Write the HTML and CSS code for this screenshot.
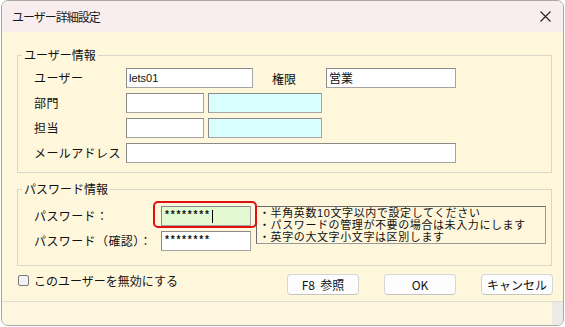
FILE: index.html
```html
<!DOCTYPE html>
<html lang="ja">
<head>
    <meta charset="UTF-8">
    <title>ユーザー詳細設定</title>
<link rel="stylesheet" href="styles.css">
</head>
<body>

    <div class="window">
        <div class="titlebar">
            <span class="title">ユーザー詳細設定</span>
            <svg class="close" width="11" height="11" viewBox="0 0 11 11">
                <path d="M0.5 0.5 L10.5 10.5 M10.5 0.5 L0.5 10.5" stroke="#222" stroke-width="1.1" fill="none"/>
            </svg>
        </div>

        <div class="content">
            <fieldset class="group group-user">
                <legend>ユーザー情報</legend>
                <div class="rows">
                    <div class="row">
                        <span class="lbl">ユーザー</span>
                        <div class="field w-user">lets01</div>
                        <span class="lbl-auth">権限</span>
                        <div class="field w-auth">営業</div>
                    </div>
                    <div class="row">
                        <span class="lbl">部門</span>
                        <div class="field w-code"></div>
                        <div class="field w-name cyan"></div>
                    </div>
                    <div class="row">
                        <span class="lbl">担当</span>
                        <div class="field w-code"></div>
                        <div class="field w-name cyan"></div>
                    </div>
                    <div class="row">
                        <span class="lbl">メールアドレス</span>
                        <div class="field w-mail"></div>
                    </div>
                </div>
            </fieldset>

            <fieldset class="group group-pass">
                <legend>パスワード情報</legend>
                <div class="pass-body">
                    <div class="rows">
                        <div class="row">
                            <span class="lbl lbl-pass">パスワード：</span>
                            <div class="pw-wrap">
                                <div class="field pw green">********<span class="caret"></span></div>
                                <span class="highlight"></span>
                            </div>
                        </div>
                        <div class="row">
                            <span class="lbl lbl-pass">パスワード（確認）：</span>
                            <div class="field pw">********</div>
                        </div>
                    </div>
                    <div class="note">
                        <p>・半角英数10文字以内で設定してください</p>
                        <p>・パスワードの管理が不要の場合は未入力にします</p>
                        <p>・英字の大文字小文字は区別します</p>
                    </div>
                </div>
            </fieldset>

            <div class="footer">
                <label class="check">
                    <span class="box"></span>
                    このユーザーを無効にする
                </label>
                <div class="buttons">
                    <button class="btn">F8&nbsp;&nbsp;参照</button>
                    <button class="btn">OK</button>
                    <button class="btn">キャンセル</button>
                </div>
            </div>
        </div>

        <div class="statusbar">
            <div class="status-main"></div>
            <div class="status-side"></div>
        </div>
    </div>

</body>
</html>
```

FILE: styles.css
```css
/* Basic reset */
* {
    margin: 0;
    padding: 0;
    box-sizing: border-box;
}

body {
    font-family: "Noto Sans CJK JP", "Noto Sans", sans-serif;
    font-size: 12px;
    color: #111;
    background-color: #ffffff;
}

.window {
    margin-left: 1px;
    width: 563px;
    height: 326px;
    border: 1px solid #a9a9a9;
    border-radius: 7px;
    overflow: hidden;
    background-color: #fff7dc;
    display: flex;
    flex-direction: column;
}

.titlebar {
    height: 31px;
    background-color: #f8eef0;
    display: flex;
    align-items: center;
    justify-content: space-between;
    padding: 0 12px 0 10px;
}

.title {
    font-size: 12px;
    letter-spacing: -1px;
    color: #1a1a1a;
}

.content {
    padding: 15px 11px 6px 15px;
    background-color: #fff7dc;
}

/* group boxes */
.group {
    border: 1px solid #d9d6cc;
    padding: 0;
    margin: 0;
    width: 535px;
}

.group legend {
    margin-left: 4px;
    padding: 0 2px;
    line-height: 16px;
    font-size: 12px;
}

.group-user .rows {
    padding: 5px 0 9px 16px;
}

.group-pass {
    margin-top: 8px;
}

.rows {
    display: flex;
    flex-direction: column;
    gap: 5px;
}

.row {
    display: flex;
    align-items: center;
    height: 20px;
}

.lbl {
    width: 92px;
    line-height: 20px;
    letter-spacing: 0.4px;
}

.lbl-pass {
    width: 127px;
}

.lbl-auth {
    width: 54px;
    margin-left: 19px;
}

.field {
    height: 20px;
    background-color: #ffffff;
    border: 1px solid #a4a4a4;
    border-top-color: #8a8a8a;
    border-left-color: #8a8a8a;
    font-size: 12px;
    line-height: 18px;
    padding-left: 2px;
}

.w-user { width: 127px; font-family: "Liberation Sans", sans-serif; font-size: 11px; }
.w-auth { width: 130px; }
.w-code { width: 78px; }
.w-name { width: 114px; margin-left: 4px; }
.w-mail { width: 330px; }

.cyan {
    background-color: #d9ffff;
}

/* password area */
.pass-body {
    display: flex;
    align-items: flex-start;
    padding: 9px 0 14px 16px;
}

.pw {
    width: 90px;
    font-family: "Liberation Mono", monospace;
    font-size: 10px;
    font-weight: bold;
    letter-spacing: -0.3px;
    display: flex;
    align-items: center;
}

.green {
    background-color: #e2f9d2;
}

.caret {
    display: inline-block;
    width: 1px;
    height: 13px;
    margin-left: 2px;
    background-color: #000;
}

.pw-wrap {
    position: relative;
}

.highlight {
    position: absolute;
    left: -8px;
    top: -5px;
    width: 104px;
    height: 27px;
    border: 2px solid #e01010;
    border-radius: 5px;
    pointer-events: none;
    z-index: 2;
}

.note {
    width: 290px;
    height: 38px;
    margin-left: 5px;
    border: 1px solid #6c6c6c;
    border-right-color: #9a9a9a;
    border-bottom-color: #9a9a9a;
    padding: 0 0 0 2px;
    font-family: "Liberation Sans", "Noto Sans CJK JP", sans-serif;
    font-size: 11px;
    line-height: 12px;
    letter-spacing: 0.6px;
}

/* footer */
.footer {
    display: flex;
    justify-content: space-between;
    align-items: flex-start;
    margin-top: 8px;
    height: 21px;
}

.check {
    display: flex;
    align-items: center;
    gap: 5px;
    margin-left: 1px;
    margin-top: -2px;
    font-size: 12px;
}

.box {
    width: 11px;
    height: 11px;
    border: 1px solid #7a7a7a;
    border-radius: 2px;
    background-color: #f2f2f2;
}

.buttons {
    display: flex;
    gap: 25px;
    margin-right: -1px;
}

.btn {
    width: 72px;
    height: 21px;
    background-color: #fdfdfd;
    border: 1px solid #d6d6d6;
    border-bottom-color: #c4c4c4;
    border-radius: 4px;
    font-family: "Noto Sans CJK JP", sans-serif;
    font-size: 12px;
    color: #111;
}

/* status bar */
.statusbar {
    flex: 1;
    display: flex;
    border-top: 1px solid #e0dccf;
}

.status-main {
    flex: 1;
    background-color: #fef6de;
}

.status-side {
    width: 11px;
    background-color: #eceae4;
}
```
